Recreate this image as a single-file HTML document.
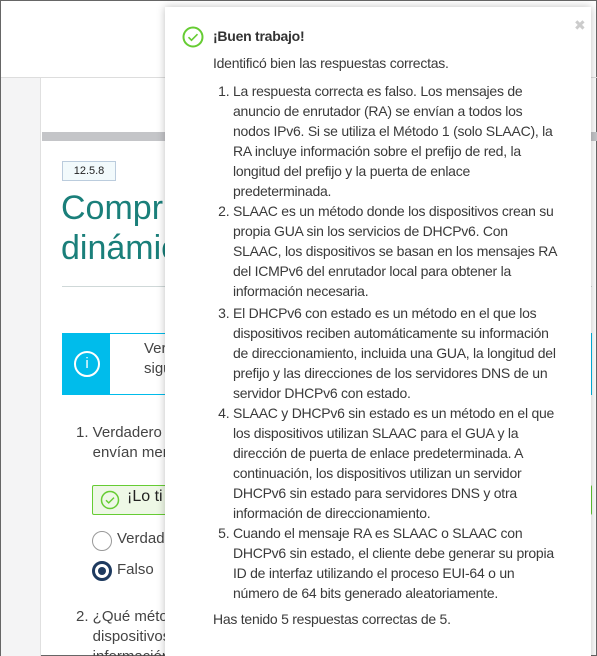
<!DOCTYPE html>
<html><head><meta charset="utf-8"><style>
*{margin:0;padding:0;box-sizing:border-box}
html{width:597px;height:656px;overflow:hidden}
body{width:597px;height:656px;overflow:hidden;font-family:"Liberation Sans",sans-serif;background:#fff;position:relative;border:1px solid #666;}
.abs{position:absolute}
.popup{position:absolute;left:164px;top:6px;width:426px;height:660px;background:#fff;box-shadow:0 0 8px rgba(0,0,0,.25);color:#3a3a3a;font-size:14px;line-height:20px;letter-spacing:-0.25px}
.popup ol{position:absolute;left:48px;top:74px;width:380px;padding-left:20px;white-space:nowrap}
.bg{color:#444;font-size:15px;line-height:30px}
</style></head><body>
<div class="abs" style="left:0;top:76px;width:597px;height:1px;background:#ddd"></div>
<div class="abs" style="left:0;top:77px;width:40px;height:580px;background:#f4f4f5;border-right:1px solid #e0e0e0"></div>
<div class="abs" style="left:41px;top:131px;width:556px;height:9px;background:#c4c5c8"></div>
<div class="abs" style="left:61px;top:160px;width:54px;height:20px;border:1px solid #bcd;background:#f2fafc;font-size:11px;text-align:center;line-height:18px;color:#222">12.5.8</div>
<div class="abs" style="left:60px;top:187px;font-size:34px;line-height:40px;color:#1a7f7a;font-weight:300">Compru<br>dinámic</div>
<div class="abs" style="left:61px;top:285px;width:530px;height:1px;background:#cfd8d8"></div>
<div class="abs" style="left:61px;top:332px;width:530px;height:62px;border:1px solid #00bceb;"></div>
<div class="abs" style="left:61px;top:332px;width:48px;height:62px;background:#00bceb"></div>
<div class="abs" style="left:73px;top:350px;width:26px;height:26px;border:2px solid #fff;border-radius:50%;color:#fff;text-align:center;font-size:15px;line-height:22px">i</div>
<div class="abs bg" style="left:143px;top:338px;line-height:20px">Ver<br>sigu</div>
<div class="abs bg" style="left:75px;top:422px;line-height:20px">1. Verdadero<br>&nbsp;&nbsp;&nbsp;&nbsp;envían men</div>
<div class="abs" style="left:91px;top:484px;width:500px;height:30px;border:1px solid #6c3;background:#eef8e6;border-radius:2px"></div>
<svg class="abs" style="left:99px;top:489px" width="20" height="20" viewBox="0 0 20 20"><circle cx="10" cy="10" r="8.5" fill="none" stroke="#6c3" stroke-width="1.5"/><path d="M6 10.2l2.7 2.7 5.3-5.3" fill="none" stroke="#6c3" stroke-width="1.4"/></svg>
<div class="abs" style="left:126px;top:487px;font-size:16px;color:#222">¡Lo ti</div>
<div class="abs" style="left:91px;top:530px;width:20px;height:20px;border:1px solid #999;border-radius:50%"></div>
<div class="abs bg" style="left:116px;top:528px;line-height:20px">Verdade</div>
<div class="abs" style="left:91px;top:560px;width:20px;height:20px;border:3px solid #1e3a5f;border-radius:50%"></div>
<div class="abs" style="left:97px;top:566px;width:8px;height:8px;background:#1e3a5f;border-radius:50%"></div>
<div class="abs bg" style="left:116px;top:559px;line-height:20px">Falso</div>
<div class="abs bg" style="left:75px;top:606px;line-height:20px">2. ¿Qué méto<br>&nbsp;&nbsp;&nbsp;&nbsp;dispositivos<br>&nbsp;&nbsp;&nbsp;&nbsp;información</div>
<div class="popup">
<svg class="abs" style="left:17px;top:19px" width="22" height="22" viewBox="0 0 22 22"><circle cx="11" cy="11" r="9.5" fill="none" stroke="#6c3" stroke-width="2"/><path d="M6.5 11.2l3 3 6-6" fill="none" stroke="#6c3" stroke-width="1.6"/></svg>
<div class="abs" style="left:409px;top:8px;color:#ccc;font-size:14px">✖</div>
<div class="abs" style="left:48px;top:19px;font-weight:bold;color:#333">¡Buen trabajo!</div>
<div class="abs" style="left:48px;top:46px">Identificó bien las respuestas correctas.</div>
<ol>
<li>La respuesta correcta es falso. Los mensajes de<br>anuncio de enrutador (RA) se envían a todos los<br>nodos IPv6. Si se utiliza el Método 1 (solo SLAAC), la<br>RA incluye información sobre el prefijo de red, la<br>longitud del prefijo y la puerta de enlace<br>predeterminada.</li>
<li>SLAAC es un método donde los dispositivos crean su<br>propia GUA sin los servicios de DHCPv6. Con<br>SLAAC, los dispositivos se basan en los mensajes RA<br>del ICMPv6 del enrutador local para obtener la<br>información necesaria.</li>
<li style="margin-top:2px">El DHCPv6 con estado es un método en el que los<br>dispositivos reciben automáticamente su información<br>de direccionamiento, incluida una GUA, la longitud del<br>prefijo y las direcciones de los servidores DNS de un<br>servidor DHCPv6 con estado.</li>
<li>SLAAC y DHCPv6 sin estado es un método en el que<br>los dispositivos utilizan SLAAC para el GUA y la<br>dirección de puerta de enlace predeterminada. A<br>continuación, los dispositivos utilizan un servidor<br>DHCPv6 sin estado para servidores DNS y otra<br>información de direccionamiento.</li>
<li>Cuando el mensaje RA es SLAAC o SLAAC con<br>DHCPv6 sin estado, el cliente debe generar su propia<br>ID de interfaz utilizando el proceso EUI-64 o un<br>número de 64 bits generado aleatoriamente.</li>
</ol>
<div class="abs" style="left:48px;top:602px">Has tenido 5 respuestas correctas de 5.</div>
</div>
</body></html>
